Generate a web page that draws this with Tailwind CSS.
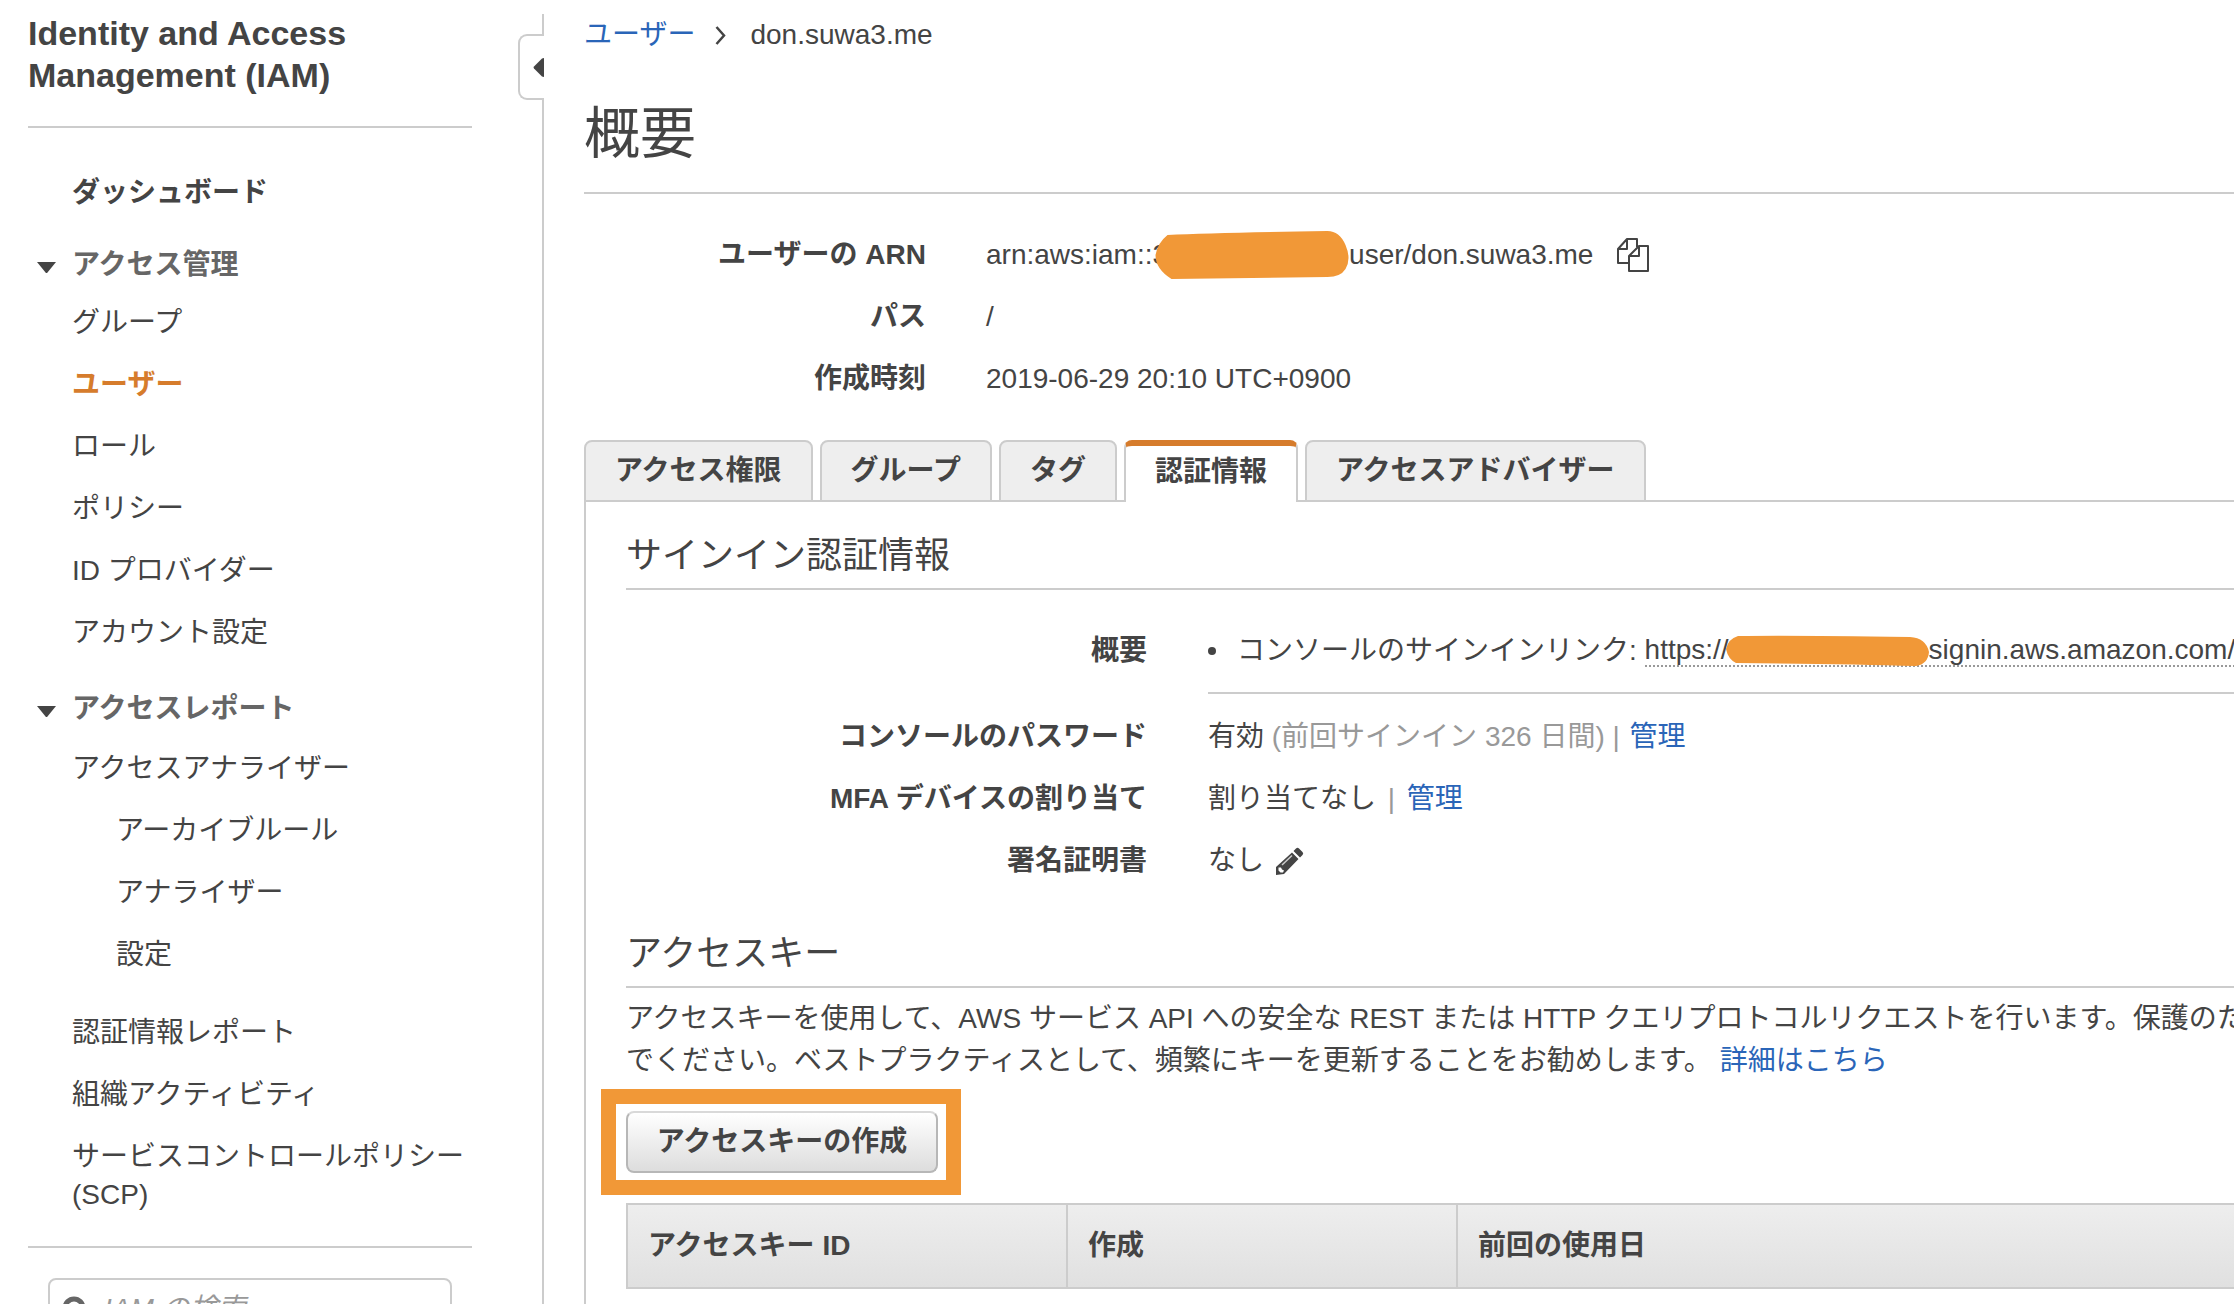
<!DOCTYPE html>
<html lang="ja">
<head>
<meta charset="utf-8">
<title>IAM - ユーザー概要</title>
<script src="https://cdn.jsdelivr.net/npm/@tailwindcss/browser@4"></script>
</head>
<body class="bg-white pb-3 overflow-hidden text-[#444444] text-[28px] leading-[38px] font-['Liberation_Sans','Noto_Sans_CJK_JP',sans-serif]">
<div class="flex h-[calc(100vh-12px)] overflow-hidden">

  <aside class="w-[472px] shrink-0 pl-7 pt-3">
    <h1 class="text-[34px] leading-[42px] font-bold">Identity and Access<br>Management (IAM)</h1>
    <nav class="mt-[30px] border-y-2 border-[#cccccc] pt-[46px] pb-8 pl-11" aria-label="IAM">
      <a href="#" class="block font-bold">ダッシュボード</a>

      <h2 class="relative mt-[34px] font-bold text-[#666666]">
        <svg class="absolute -left-[35px] top-4" width="19" height="12" viewBox="0 0 19 12" aria-hidden="true"><path d="M0 0H19L10.5 10.5Q9.5 11.5 8.5 10.5Z" fill="#444"/></svg>
        アクセス管理
      </h2>
      <ul class="mt-5 flex flex-col gap-6">
        <li><a href="#">グループ</a></li>
        <li><a href="#" class="font-bold text-[#d67c2c]" aria-current="page">ユーザー</a></li>
        <li><a href="#">ロール</a></li>
        <li><a href="#">ポリシー</a></li>
        <li><a href="#">ID プロバイダー</a></li>
        <li><a href="#">アカウント設定</a></li>
      </ul>

      <h2 class="relative mt-[38px] font-bold text-[#666666]">
        <svg class="absolute -left-[35px] top-4" width="19" height="12" viewBox="0 0 19 12" aria-hidden="true"><path d="M0 0H19L10.5 10.5Q9.5 11.5 8.5 10.5Z" fill="#444"/></svg>
        アクセスレポート
      </h2>
      <ul class="mt-[22px] flex flex-col gap-6">
        <li><a href="#">アクセスアナライザー</a></li>
        <li class="pl-11"><a href="#">アーカイブルール</a></li>
        <li class="pl-11"><a href="#">アナライザー</a></li>
        <li class="pl-11"><a href="#">設定</a></li>
      </ul>
      <ul class="mt-10 flex flex-col gap-6">
        <li><a href="#">認証情報レポート</a></li>
        <li><a href="#">組織アクティビティ</a></li>
        <li><a href="#">サービスコントロールポリシー<br>(SCP)</a></li>
      </ul>
    </nav>
    <div class="relative mx-5 mt-[30px]">
      <svg class="absolute left-[14px] top-[18px]" width="26" height="28" viewBox="0 0 26 28" fill="none" stroke="#666" stroke-width="5" aria-hidden="true"><circle cx="12" cy="12" r="9"/><path d="M18 19L25 27"/></svg>
      <input type="search" aria-label="IAM の検索" placeholder="IAM の検索" class="block h-[62px] w-full rounded-lg border-2 border-[#cccccc] pl-[54px] italic placeholder:text-[#999999]">
    </div>
  </aside>

  <div class="mt-[14px] flex w-[72px] shrink-0 flex-col items-end">
    <div class="h-[20px] w-[2px] bg-[#cccccc]"></div>
    <button aria-label="ナビゲーションを閉じる" class="flex h-[66px] w-[26px] items-center justify-end rounded-l-[9px] border-y-2 border-l-2 border-[#cccccc]">
      <svg width="11" height="19" viewBox="0 0 11 19" aria-hidden="true"><path d="M11 0V19L9 18.5L1 10.5Q0 9.5 1 8.5L9 0.5Z" fill="#444"/></svg>
    </button>
    <div class="w-[2px] grow bg-[#cccccc]"></div>
  </div>

  <main class="ml-10 flex min-w-0 flex-1 flex-col pt-4">
    <nav class="flex items-center" aria-label="パンくずリスト">
      <a href="#" class="text-[#2a65b8]">ユーザー</a>
      <svg class="ml-5 mr-6" width="11" height="19" viewBox="0 0 11 19" fill="none" stroke="#444" stroke-width="2.5" aria-hidden="true"><path d="M1.5 1L9 9.5L1.5 18"/></svg>
      <span>don.suwa3.me</span>
    </nav>
    <h1 class="mt-11 border-b-2 border-[#cccccc] pb-[22px] text-[56px] leading-[72px]">概要</h1>

    <dl class="mt-[42px] grid grid-cols-[342px_1fr] gap-x-[60px] gap-y-6 whitespace-nowrap">
      <dt class="text-right font-bold">ユーザーの ARN</dt>
      <dd class="flex items-center">arn:aws:iam::3
        <svg class="relative -my-2 -ml-[13px] -mr-[1px] shrink-0" width="195" height="48" viewBox="0 0 194 48" role="img" aria-label="非表示"><path d="M12 4Q60 2 172 0Q184 0 190 14Q196 28 190 38Q185 46 172 46L16 48Q0 38 0 24Q2 12 12 4Z" fill="#f19837"/></svg>
        user/don.suwa3.me
        <button class="ml-6" aria-label="コピー">
          <svg width="32" height="34" viewBox="0 0 32 34" fill="none" stroke="#444" stroke-width="2" stroke-linejoin="round" aria-hidden="true"><path d="M12 25H1V11L10 1H20V9M10 1V11H1M22 8H31V33H12V18L22 8V18H12"/></svg>
        </button>
      </dd>
      <dt class="text-right font-bold">パス</dt>
      <dd>/</dd>
      <dt class="text-right font-bold">作成時刻</dt>
      <dd>2019-06-29 20:10 UTC+0900</dd>
    </dl>

    <div class="relative z-10 mt-[42px] -mb-[2px] flex gap-[7px] font-bold whitespace-nowrap" role="tablist">
      <button role="tab" class="h-[62px] rounded-t-lg border-2 border-[#cccccc] bg-[#eeeeee] px-[29px]">アクセス権限</button>
      <button role="tab" class="h-[62px] rounded-t-lg border-2 border-[#cccccc] bg-[#eeeeee] px-[29px]">グループ</button>
      <button role="tab" class="h-[62px] rounded-t-lg border-2 border-[#cccccc] bg-[#eeeeee] px-[29px]">タグ</button>
      <button role="tab" aria-selected="true" class="h-[62px] rounded-t-lg border-x-2 border-t-[6px] border-x-[#cccccc] border-t-[#d67c2c] bg-white px-[29px] pb-1">認証情報</button>
      <button role="tab" class="h-[62px] rounded-t-lg border-2 border-[#cccccc] bg-[#eeeeee] px-[29px]">アクセスアドバイザー</button>
    </div>

    <section class="grow border-t-2 border-l-2 border-[#cccccc] pl-10 pt-[30px] whitespace-nowrap" role="tabpanel">
      <h2 class="border-b-2 border-[#cccccc] pb-2 text-[36px] leading-[48px]">サインイン認証情報</h2>
      <dl class="mt-[42px] grid grid-cols-[521px_1fr] gap-x-[61px] gap-y-6">
        <dt class="text-right font-bold">概要</dt>
        <dd class="border-b-2 border-[#cccccc] pb-[22px]">
          <ul>
            <li class="flex items-center">
              <span class="mr-[21px] size-2 rounded-full bg-[#444444]"></span>
              コンソールのサインインリンク:&nbsp;<a href="#" class="flex h-8 items-center border-b-2 border-dotted border-[#999999]">https://
                <svg class="relative -ml-[3px] shrink-0" width="203" height="31" viewBox="0 0 203 31" role="img" aria-label="非表示"><path d="M12 1Q60 0 184 2Q200 3 203 17Q202 29 190 31Q120 29 10 28Q2 24 0 14Q2 4 12 1Z" fill="#f19837"/></svg>
                signin.aws.amazon.com/</a>
            </li>
          </ul>
        </dd>
        <dt class="text-right font-bold">コンソールのパスワード</dt>
        <dd>有効 <span class="text-[#999999]">(前回サインイン 326 日間) |</span> <a href="#" class="ml-0.5 text-[#2a65b8]">管理</a></dd>
        <dt class="text-right font-bold">MFA デバイスの割り当て</dt>
        <dd>割り当てなし <span class="mx-1 text-[#999999]">|</span> <a href="#" class="text-[#2a65b8]">管理</a></dd>
        <dt class="text-right font-bold">署名証明書</dt>
        <dd class="flex items-center">なし
          <button class="ml-3" aria-label="編集">
            <svg width="28" height="28" viewBox="0 0 28 28" aria-hidden="true"><path d="M20 1.500Q21.500 0 23 1.500L26.500 5Q28 6.500 26.500 8L24 10.500L17.500 4ZM16 5.500L22.500 12L8 27L0 28V20Z" fill="#444"/><path d="M2.500 20.500L5 20.500L6 22.500L8 23.500L7 25.500L4.500 25.500L2.500 23.500Z" fill="#fff"/><path d="M6 18L16 8.500" stroke="#ccc" stroke-width="1.500"/></svg>
          </button>
        </dd>
      </dl>

      <h2 class="mt-[50px] border-b-2 border-[#cccccc] pb-2 text-[36px] leading-[48px]">アクセスキー</h2>
      <p class="mt-[10px] leading-[42px]">アクセスキーを使用して、AWS サービス API への安全な REST または HTTP クエリプロトコルリクエストを行います。保護のた<br>でください。ベストプラクティスとして、頻繁にキーを更新することをお勧めします。 <a href="#" class="text-[#2a65b8]">詳細はこちら</a></p>

      <div class="-ml-[25px] mt-[7px] w-fit border-[15px] border-[#f19837] py-[7px] pl-[10px] pr-2">
        <button class="block h-[62px] w-[312px] rounded-lg border-2 border-[#b7b7b7] border-t-[#d9d9d9] bg-linear-to-b from-white to-[#dddddd] font-bold">アクセスキーの作成</button>
      </div>

      <table class="mt-2 w-full table-fixed border-2 border-r-0 border-[#cccccc]">
        <thead>
          <tr class="h-[84px] bg-linear-to-b from-[#eeeeee] to-[#e0e0e0] text-left">
            <th class="w-[440px] border-r-2 border-[#cccccc] pl-5">アクセスキー ID</th>
            <th class="w-[390px] border-r-2 border-[#cccccc] pl-5">作成</th>
            <th class="pl-5">前回の使用日</th>
          </tr>
        </thead>
      </table>
    </section>
  </main>
</div>
</body>
</html>
